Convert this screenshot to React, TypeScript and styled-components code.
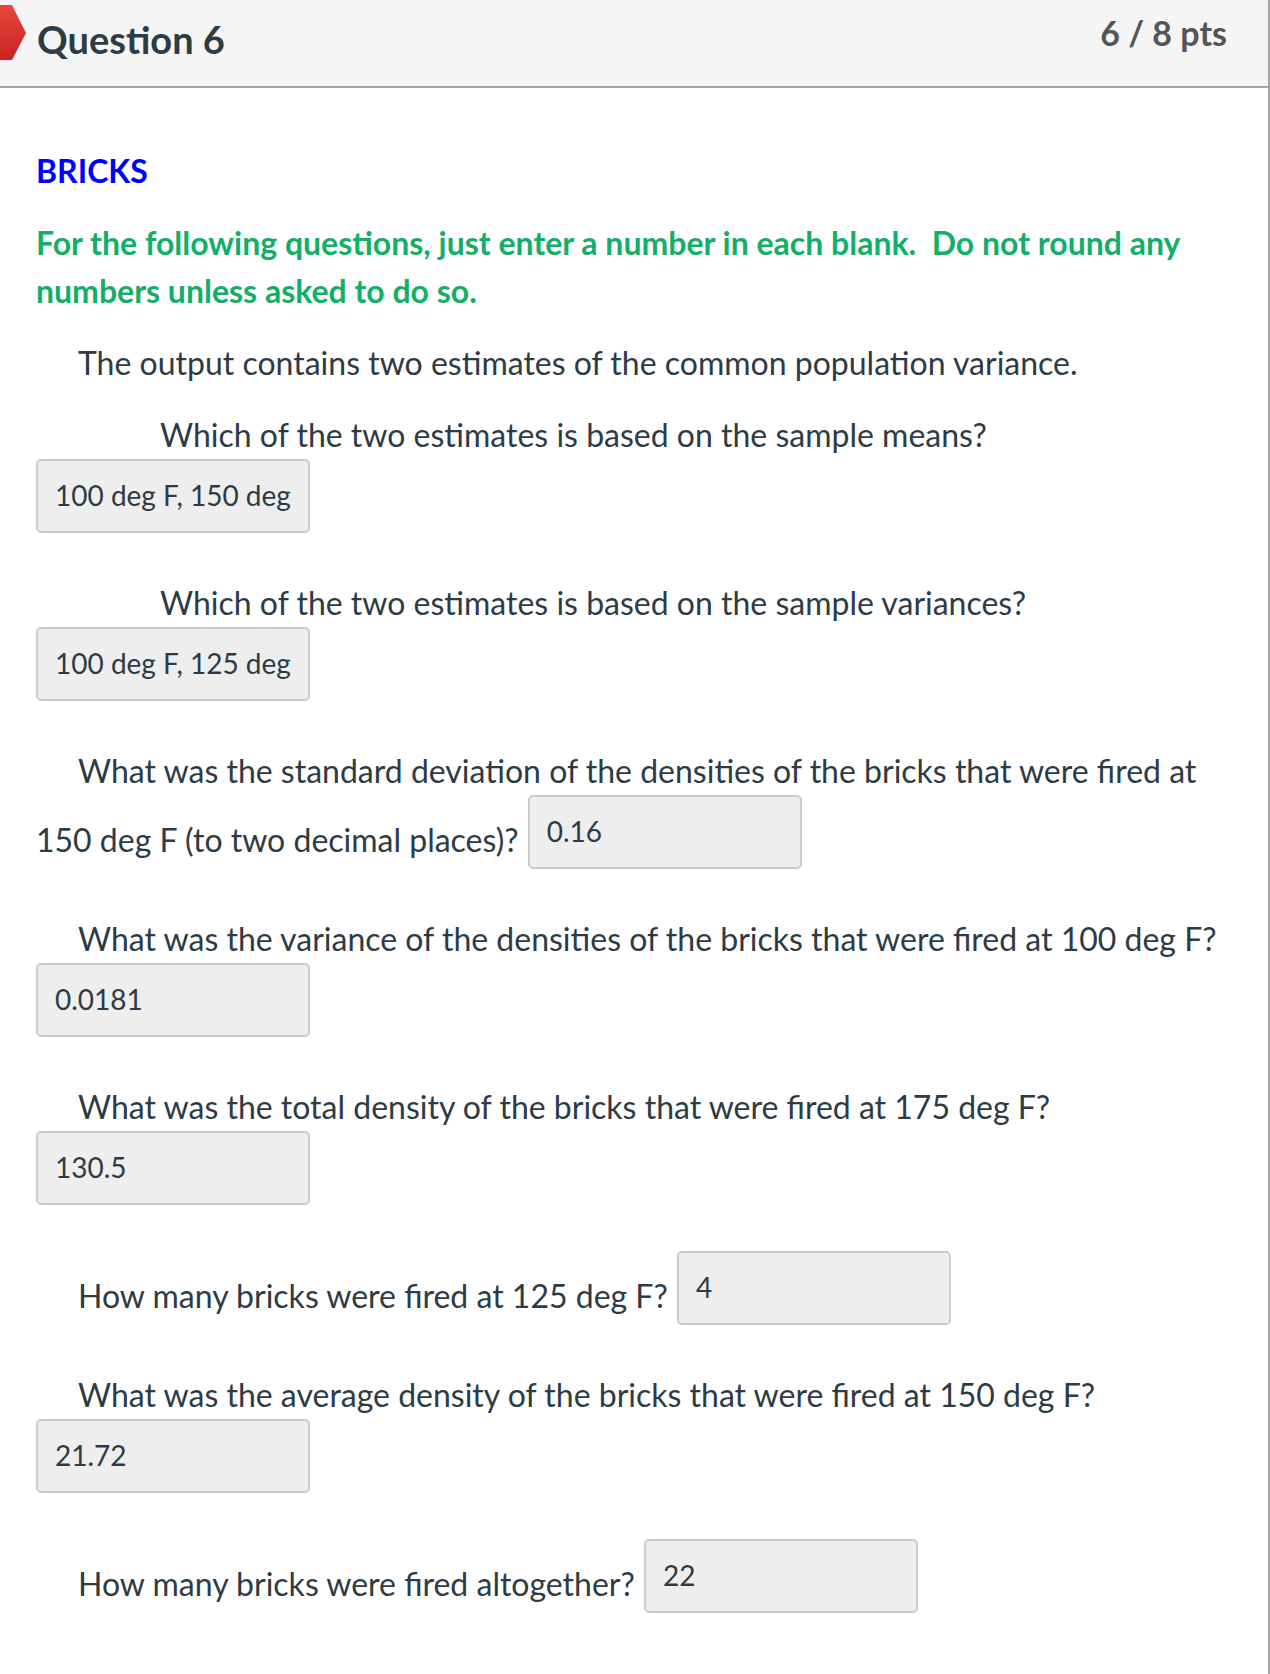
import React from 'react'
import styled, { createGlobalStyle } from 'styled-components';

const GlobalStyle = createGlobalStyle`
body {
  margin: 0;
  background: #fff;
  font-family: Lato, "Noto Sans", sans-serif;
  color: #2d3b45;
}
`

const Page = styled.div`
width: 1270px;
height: 1674px;
box-sizing: border-box;
border-right: 2px solid #a5a5a5;
overflow: hidden;
`

const Header = styled.header`
position: relative;
height: 88px;
box-sizing: border-box;
display: flex;
justify-content: space-between;
align-items: flex-start;
padding: 0 41px 0 37px;
background: #f5f5f5;
border-bottom: 2px solid #a5a5a5;
`

const Marker = styled.svg`
position: absolute;
left: 0;
top: 5px;
`

const QuestionName = styled.h2`
margin: 16px 0 0;
font-size: 38px;
line-height: 47px;
font-weight: 700;
color: #2d3b45;
`

const Points = styled.div`
margin-top: 13px;
font-size: 34px;
line-height: 40px;
font-weight: 700;
color: #555;
`

const Body = styled.div`
padding: 59px 22px 0 36px;
`

const Topic = styled.p`
margin: 0 0 24px;
font-size: 32px;
line-height: 48px;
font-weight: 700;
color: #0000ff;
`

const Instructions = styled.p`
margin: 0 0 24px;
font-size: 32px;
line-height: 48px;
font-weight: 700;
color: #13ae67;
`

const Para = styled.p<{ $indent?: number; $gap?: number }>`
margin: 0 0 ${({ $gap }) => $gap ?? 24}px;
text-indent: ${({ $indent }) => $indent ?? 0}px;
font-size: 32px;
line-height: 48px;
color: #2d3b45;
`

const Answer = styled.span<{ $inline?: boolean }>`
display: inline-block;
box-sizing: border-box;
width: 274px;
height: 74px;
margin-left: ${({ $inline }) => ($inline ? 1 : 0)}px;
padding: 18px 17px 0;
vertical-align: 10px;
text-indent: 0;
white-space: nowrap;
font-size: 28px;
line-height: 32px;
color: #2d3b45;
background: #eeeeee;
border: 2px solid #cbcbcb;
border-radius: 5px;
`

const RedMarker = () => (
    <Marker width="27" height="56" viewBox="0 0 27 56">
        <defs>
            <linearGradient id="mk" x1="0" y1="0" x2="0" y2="1">
                <stop offset="0" stopColor="#e8463f" />
                <stop offset="1" stopColor="#c9231f" />
            </linearGradient>
        </defs>
        <polygon points="0,0 12,0 26,28 12,55 0,55" fill="url(#mk)" />
    </Marker>
)

const App = () => (
    <Page>
        <GlobalStyle />
        <Header>
            <RedMarker />
            <QuestionName>Question 6</QuestionName>
            <Points>6 / 8 pts</Points>
        </Header>
        <Body>
            <Topic>BRICKS</Topic>
            <Instructions>
                For the following questions, just enter a number in each blank.{'\u00a0'} Do not round any numbers unless asked to do so.
            </Instructions>
            <Para $indent={42}>The output contains two estimates of the common population variance.</Para>
            <Para $indent={124} $gap={46}>
                Which of the two estimates is based on the sample means?
                <br />
                <Answer>100 deg F, 150 deg</Answer>
            </Para>
            <Para $indent={124} $gap={46}>
                Which of the two estimates is based on the sample variances?
                <br />
                <Answer>100 deg F, 125 deg</Answer>
            </Para>
            <Para $indent={42} $gap={46}>
                What was the standard deviation of the densities of the bricks that were fired at 150 deg F (to two decimal places)? <Answer $inline>0.16</Answer>
            </Para>
            <Para $indent={42} $gap={46}>
                What was the variance of the densities of the bricks that were fired at 100 deg F?
                <br />
                <Answer>0.0181</Answer>
            </Para>
            <Para $indent={42} $gap={46}>
                What was the total density of the bricks that were fired at 175 deg F?
                <br />
                <Answer>130.5</Answer>
            </Para>
            <Para $indent={42} $gap={46}>
                How many bricks were fired at 125 deg F? <Answer $inline>4</Answer>
            </Para>
            <Para $indent={42} $gap={46}>
                What was the average density of the bricks that were fired at 150 deg F?
                <br />
                <Answer>21.72</Answer>
            </Para>
            <Para $indent={42} $gap={46}>
                How many bricks were fired altogether? <Answer $inline>22</Answer>
            </Para>
        </Body>
    </Page>
)

export default App;
